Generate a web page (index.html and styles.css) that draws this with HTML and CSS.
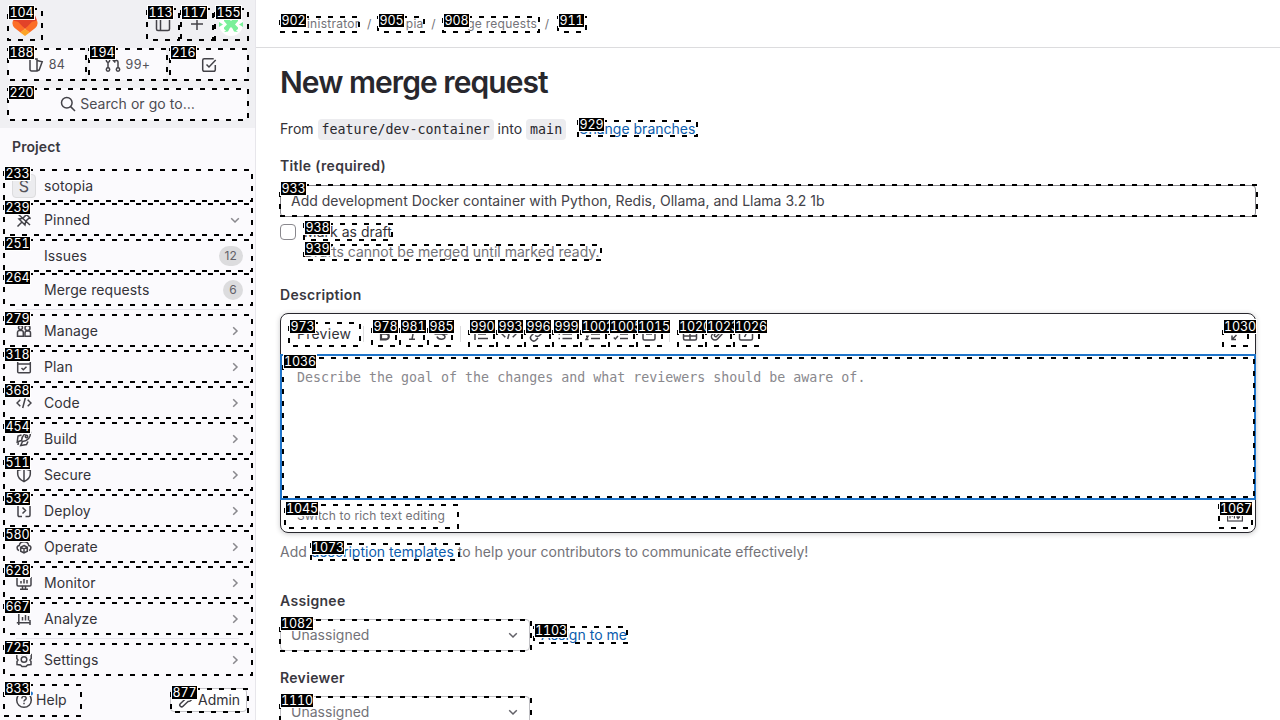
FILE: index.html
```html
<!DOCTYPE html>
<html lang="en">
<head>
<meta charset="utf-8">
<title>New merge request</title>
<link rel="stylesheet" href="styles.css">
</head>
<body>
<svg class="defs" width="0" height="0">
  <symbol id="right" viewBox="0 0 16 16"><path d="M6.2 4.2 10 8l-3.800 3.800"/></symbol>
  <symbol id="down" viewBox="0 0 16 16"><path d="M4.2 6.200 8 10l3.800-3.800"/></symbol>
  <symbol id="search" viewBox="0 0 16 16"><circle cx="6.8" cy="6.8" r="5.300"/><path d="m10.6 10.6 4.4 4.4"/></symbol>
  <symbol id="code" viewBox="0 0 16 16"><path d="M4.3 4.8 1 8l3.3 3.2M11.7 4.8 15 8l-3.3 3.2M9.3 3 6.7 13"/></symbol>
</svg>
<div class="app">
  <aside class="sidebar">
    <div class="super">
      <div class="brand-row">
        <svg class="logo" viewBox="0 0 26 25"><path fill="#e24329" d="M25 9.6 21.5.6 18.4 8H7.6L4.5.6 1 9.6 13 18z"/><path fill="#fc6d26" d="m25 9.6-5 1.2L13 18l4.500 3.500 5.800-4.600A6.500 6.500 0 0 0 25 9.600zM1 9.600l5 1.200L13 18l-4.500 3.500-5.800-4.600A6.500 6.500 0 0 1 1 9.600z"/><path fill="#fca326" d="M8.300 21.400 13 17.700l4.700 3.700L13 25z"/></svg>
        <div class="brand-actions">
          <svg class="icon" viewBox="0 0 16 16"><rect x="1.500" y="1.500" width="13" height="13" rx="1.500"/><path d="M5.500 2v12"/></svg>
          <svg class="icon" viewBox="0 0 16 16"><path d="M8 2v12M2 8h12"/></svg>
          <svg class="avatar" viewBox="0 0 24 24"><circle cx="12" cy="12" r="12" fill="#fff"/><path fill="#7af09a" d="M5 4l4 2 3 3 3-3 4-2v5l-3 3.500 3 3V20l-4-.5-1.500-3L12 15l-1.500 1.500-1.500 3L5 20v-4.500l3-3L5 9zM0 10l4 2.500L0 15zM24 10l-4 2.500 4 2.500z"/><path fill="#fff" d="M5 17l2 1.500L5 20zM19 17l-2 1.500 2 1.500z"/></svg>
        </div>
      </div>
      <div class="counters">
        <div class="counter"><svg class="icon" viewBox="0 0 16 16"><path d="M2 2h7v12H3.500A1.500 1.500 0 0 1 2 12.500zM9 3.500l5.200 1.200-3 8.300L9 14"/></svg>84</div>
        <div class="counter"><svg class="icon" viewBox="0 0 16 16"><circle cx="3" cy="12.500" r="1.700"/><circle cx="13" cy="12.500" r="1.700"/><circle cx="3" cy="3.500" r="1.700"/><path d="M3 5v6M13 11V5a1.500 1.500 0 0 0-1.500-1.500H8.500M10.300 1.500l-2 2 2 2"/></svg>99+</div>
        <div class="counter"><svg class="icon" viewBox="0 0 16 16"><path d="M14.300 8v4.800a1.500 1.500 0 0 1-1.500 1.500H3.200a1.500 1.500 0 0 1-1.500-1.500V3.200a1.500 1.500 0 0 1 1.500-1.500h9.500M5.500 7.500 8 10l6.700-7"/></svg></div>
      </div>
      <div class="search"><svg class="icon"><use href="#search"/></svg>Search or go to…</div>
    </div>
    <nav class="nav">
      <div class="nav-title">Project</div>
      <div class="item item-project"><span class="tile">S</span><span class="label">sotopia</span></div>
      <div class="item item-pinned"><svg class="icon" viewBox="0 0 16 16"><path d="m1.500 14.500 4-4M3 7l6 6 .8-3.800L13 6l1.500.500L9.500 1.500 10 3 6.800 6.200zM2 2l12 11"/></svg><span class="label">Pinned</span><svg class="icon chev"><use href="#down"/></svg></div>
      <div class="item"><span class="icon"></span><span class="label">Issues</span><span class="badge">12</span></div>
      <div class="item"><span class="icon"></span><span class="label">Merge requests</span><span class="badge">6</span></div>
      <hr class="rule">
      <div class="group">
        <div class="item"><svg class="icon" viewBox="0 0 16 16"><circle cx="4.500" cy="4.500" r="2"/><circle cx="11.500" cy="5" r="2.500"/><path d="M1.500 13.300V9.500a2 2 0 0 1 2-2h1.800a2 2 0 0 1 2 2v3.800zM9 13.300V10a2 2 0 0 1 2-2h1.500a2 2 0 0 1 2 2v3.300z"/></svg><span class="label">Manage</span><svg class="icon chev"><use href="#right"/></svg></div>
        <div class="item"><svg class="icon" viewBox="0 0 16 16"><rect x="1.700" y="1.700" width="12.600" height="12" rx="1"/><path d="M2 5h12M5.500 9l1.800 1.700 3.200-3"/></svg><span class="label">Plan</span><svg class="icon chev"><use href="#right"/></svg></div>
        <div class="item"><svg class="icon"><use href="#code"/></svg><span class="label">Code</span><svg class="icon chev"><use href="#right"/></svg></div>
        <div class="item"><svg class="icon" viewBox="0 0 16 16"><path d="M5.500 9.500C6 5 9 1.500 14.500 1.500 14.500 7 11 10 6.500 10.500zM5.500 4 2 5l-.800 6 4-1.500M12 10.500 10.500 13.500l-5.800 1 1.800-4M2.500 11.500c-.500 1-.500 1.500-.500 2.500"/><circle cx="10.500" cy="5.500" r="1.200"/></svg><span class="label">Build</span><svg class="icon chev"><use href="#right"/></svg></div>
        <div class="item"><svg class="icon" viewBox="0 0 16 16"><path d="M8 1.500 1.700 3.500V7c0 3.500 3 6 6.300 7.700 3.300-1.700 6.300-4.200 6.300-7.700V3.500zM8 2v12"/></svg><span class="label">Secure</span><svg class="icon chev"><use href="#right"/></svg></div>
        <div class="item"><svg class="icon" viewBox="0 0 16 16"><path d="M5 1.800H2v10.500a1.200 1.200 0 0 0 1.200 1.200H6M9.500 13.500h3.300a1.200 1.200 0 0 0 1.200-1.200V2M6.500 4.500 9.500 7.500l-3 3"/></svg><span class="label">Deploy</span><svg class="icon chev"><use href="#right"/></svg></div>
        <div class="item"><svg class="icon" viewBox="0 0 16 16"><path d="M3 11.500C.300 10.500.500 6.800 3.300 6.500 4 1.500 12 1.500 12.700 6.500c2.800.3 3 4 .300 5M8 6.500l3.300 1.800v3.900L8 14l-3.300-1.800V8.300zM4.700 8.300 8 10l3.300-1.700M8 10v4"/></svg><span class="label">Operate</span><svg class="icon chev"><use href="#right"/></svg></div>
        <div class="item"><svg class="icon" viewBox="0 0 16 16"><path d="M1 2v7.800a1.200 1.200 0 0 0 1.200 1.200h11.600a1.200 1.200 0 0 0 1.200-1.200V2M5 6v2.500M8 4v4.500M11 5v3.500M6.500 11v3M9.500 11v3M4 14.200h8"/></svg><span class="label">Monitor</span><svg class="icon chev"><use href="#right"/></svg></div>
        <div class="item"><svg class="icon" viewBox="0 0 16 16"><path d="M2.800 1v13M.800 11.800h14M6.500 6v3.500M9.500 4v5.500M12.500 5v4.500M14 9v5"/></svg><span class="label">Analyze</span><svg class="icon chev"><use href="#right"/></svg></div>
      </div>
      <hr class="rule">
      <div class="item item-settings"><svg class="icon" viewBox="0 0 16 16"><path d="M5.500 2.500V1.500h5v1l3.500-.500 1.200.500v4L14 8l1 1.500v3l-3.500.500L10 14.500H6L4.500 13 1 12.500v-3L2 8 .800 6.500v-4L2 2z"/><circle cx="8" cy="7.500" r="2.800"/></svg><span class="label">Settings</span><svg class="icon chev"><use href="#right"/></svg></div>
    </nav>
    <div class="foot">
      <div class="help"><svg class="icon" viewBox="0 0 16 16"><circle cx="8" cy="8" r="7.300"/><path d="M5.800 6.500C5.800 3.700 10.200 3.700 10.200 6.300 10.200 8 8 7.800 8 9.500M8 10.700v1.600"/><circle class="dot" cx="15" cy="1.500" r="2"/></svg>Help</div>
      <div class="admin"><svg class="icon" viewBox="0 0 16 16"><path d="M10 9.500 5 14.200a1.600 1.600 0 0 1-2.700-2.500L7 7.200A4 4 0 0 1 12 2L9.700 4.500l2 2L14 4.200a4 4 0 0 1-4 5.300z"/></svg>Admin</div>
    </div>
  </aside>
  <main class="main">
    <div class="crumbs"><span>Administrator</span><i>/</i><span>sotopia</span><i>/</i><span>Merge requests</span><i>/</i><span>New</span></div>
    <div class="content">
      <h1>New merge request</h1>
      <div class="branches">From <code>feature/dev-container</code> into <code>main</code><a>Change branches</a></div>
      <div class="field-label">Title (required)</div>
      <div class="input">Add development Docker container with Python, Redis, Ollama, and Llama 3.2 1b</div>
      <div class="draft"><span class="check"></span><div><div class="draft-name">Mark as draft</div><div class="draft-help">Drafts cannot be merged until marked ready.</div></div></div>
      <div class="field-label desc-label">Description</div>
      <div class="editor">
        <div class="toolbar">
          <span class="preview">Preview</span><span class="sep"></span>
          <div class="tools">
            <svg class="icon heavy" viewBox="0 0 16 16"><path d="M4 2.500h4.500a2.600 2.600 0 0 1 0 5.200H4zM4 7.700h5a2.800 2.800 0 0 1 0 5.600H4z"/></svg>
            <svg class="icon" viewBox="0 0 16 16"><path d="M6 2.500h6M4 13.300h6M9 2.500l-2 10.800"/></svg>
            <svg class="icon" viewBox="0 0 16 16"><path d="M12 4.500C11 1.500 4.500 1.500 4.500 4.800 4.500 8 12 7.500 12 10.800c0 3.500-7 3.200-8-.300M1.500 8h13"/></svg>
          </div><span class="sep"></span>
          <div class="tools">
            <svg class="icon" viewBox="0 0 16 16"><path d="M2 2v12M5 4h10M5 8h8M5 12.500h10"/></svg>
            <svg class="icon"><use href="#code"/></svg>
            <svg class="icon" viewBox="0 0 16 16"><path d="m7 4 2-2a3 3 0 0 1 4.500 4.500l-3 3a3 3 0 0 1-4.300 0M9 12l-2 2a3 3 0 0 1-4.500-4.500l3-3a3 3 0 0 1 4.300 0"/></svg>
            <svg class="icon" viewBox="0 0 16 16"><path d="M1.500 3.500H3M1.500 8H3M1.500 12.500H3M5.500 3.500H15M5.500 8H15M5.500 12.500H15"/></svg>
            <svg class="icon" viewBox="0 0 16 16"><path d="M2 2v4M1 10.300h2L1 13.500h2.500M6 3.500h9M6 8h9M6 12.500h9"/></svg>
            <svg class="icon" viewBox="0 0 16 16"><path d="m.800 3.500 1.500 1.500L5 2M.800 11.500 2.300 13 5 10M7 3.500h8M7 8h8M7 12.500h8"/></svg>
            <svg class="icon" viewBox="0 0 16 16"><rect x="2" y="2" width="12" height="12" rx="1.500"/><path d="M5 8h6"/></svg>
          </div><span class="sep"></span>
          <div class="tools">
            <svg class="icon" viewBox="0 0 16 16"><rect x="1.500" y="2" width="13" height="12" rx="1.500"/><path d="M8 2v12M2 6h12M2 10h12"/></svg>
            <svg class="icon" viewBox="0 0 16 16"><path d="m11.500 5.500-5 5a1.500 1.500 0 0 1-2-2L10 3a2.500 2.500 0 0 1 3.500 3.500l-6 6.500a3.500 3.500 0 0 1-5-5L8 2"/></svg>
            <svg class="icon" viewBox="0 0 16 16"><rect x="1.500" y="2" width="13" height="12" rx="1.500"/><path d="M9.500 5 6.500 11"/></svg>
          </div>
          <svg class="icon expand" viewBox="0 0 16 16"><path d="M10 2h4v4M14 2 9.500 6.500M6 13.500H2v-4M2 13.500l4.500-4.500"/></svg>
        </div>
        <div class="textarea">Describe the goal of the changes and what reviewers should be aware of.</div>
        <div class="editor-foot"><span>Switch to rich text editing</span><svg class="icon md" viewBox="0 0 16 16"><rect x=".600" y="3" width="14.800" height="10"/><path d="M3 10.500v-5l2.200 2.500 2.200-2.500v5M11 5.500v5M9.500 8.500 11 10.500l2-2"/></svg></div>
      </div>
      <div class="hint">Add <a>description templates</a> to help your contributors to communicate effectively!</div>
      <div class="field-label assignee-label">Assignee</div>
      <div class="pick-row"><div class="select">Unassigned<svg class="icon"><use href="#down"/></svg></div><a>Assign to me</a></div>
      <div class="field-label reviewer-label">Reviewer</div>
      <div class="pick-row"><div class="select">Unassigned<svg class="icon"><use href="#down"/></svg></div></div>
    </div>
  </main>
</div>
<div class="marks" id="marks"></div>
<script src="marks.js"></script>
</body>
</html>
```

FILE: styles.css
```css
* { box-sizing: border-box; }
html, body { margin: 0; height: 720px; overflow: hidden; }
body { font-family: Inter, "Noto Sans", sans-serif; font-size: 14px; line-height: 20px; letter-spacing: .01px; color: #333238; background: #fff; }
a { color: #0b5cad; }
.defs { position: absolute; }
.app { display: flex; height: 720px; }
.icon { width: 16px; height: 16px; flex: none; fill: none; stroke: #434248; stroke-width: 1.5; }
.heavy { stroke-width: 2.2; }

.sidebar { width: 256px; flex: none; display: flex; flex-direction: column; background: #fbfafd; border-right: 1px solid #e7e6eb; }
.super { height: 128px; padding: 8px; background: #f0f0f3; display: flex; flex-direction: column; gap: 8px; }
.brand-row { height: 32px; display: flex; justify-content: space-between; align-items: center; padding: 0 4px; }
.logo { width: 26px; height: 25px; margin-top: -2px; }
.brand-actions { display: flex; align-items: center; gap: 18px; margin-right: 0; }
.brand-actions .avatar { width: 24px; height: 24px; margin-left: -4px; }
.counters { display: flex; gap: 4px; }
.counter { flex: 1; height: 32px; padding-top: 1px; display: flex; align-items: center; justify-content: center; gap: 5px; background: #fbfafd; border-radius: 4px; font-size: 12.5px; letter-spacing: .4px; color: #535158; }
.search { height: 32px; display: flex; align-items: center; justify-content: center; gap: 4px; background: #fbfafd; border-radius: 4px; letter-spacing: .05px; color: #4c4b51; }

.nav { flex: 1; padding: 0 4px; letter-spacing: .1px; }
.nav-title { height: 42px; padding: 9px 8px 0; font-weight: 600; color: #3a383f; }
.item { height: 32px; margin-bottom: 2px; padding: 0 8px 0 12px; display: flex; align-items: center; gap: 12px; }
.item .label { flex: 1; }
.item-project { padding-left: 8px; gap: 8px; }
.item-pinned { margin-bottom: 4px; }
.tile { width: 24px; height: 24px; border: 1px solid #dcdcde; border-radius: 4px; background: #ececef; text-align: center; line-height: 22px; font-size: 16px; color: #535158; }
.item .chev { stroke: #89888d; }
.badge { height: 20px; min-width: 20px; padding: 0 6px; border-radius: 10px; background: #dcdcde; font-size: 12px; text-align: center; color: #626168; }
.rule { height: 1px; border: 0; margin: 3px 12px 5px; background: #e7e6ee; }
.group .item { margin-bottom: 4px; }
.group .item:last-child { margin-bottom: 3px; }
.foot { height: 40px; padding: 0 8px 0 16px; display: flex; align-items: center; justify-content: space-between; letter-spacing: .05px; }
.help { display: flex; align-items: center; gap: 4px; }
.help .icon { overflow: visible; }
.dot { fill: #1f75cb; stroke: none; }
.admin { height: 24px; width: 77px; padding-left: 1px; display: flex; align-items: center; justify-content: center; gap: 4px; background: #fff; border: 1px solid #c5c4c9; border-radius: 4px; letter-spacing: -.05px; }

.main { flex: 1; }
.crumbs { height: 48px; padding-left: 24px; display: flex; align-items: center; border-bottom: 1px solid #dcdcde; font-size: 12px; letter-spacing: .27px; color: #737278; }
.crumbs i { font-style: normal; padding: 0 8.5px 0 7.5px; }
.content { padding: 14px 24px 0; }
h1 { margin: 0; height: 40px; line-height: 40px; font-size: 30px; font-weight: 600; letter-spacing: -.95px; color: #28272d; }
.branches { height: 22px; margin-top: 16px; display: flex; align-items: center; white-space: pre; }
code { height: 21px; padding: 0 4px; border-radius: 4px; background: #ececef; font: 13.3px/21px "DejaVu Sans Mono", monospace; letter-spacing: 0; color: #28272d; }
.branches a { margin-left: 12px; }
.field-label { height: 20px; margin-top: 16px; font-weight: 600; color: #3a383f; letter-spacing: .32px; }
.input { height: 32px; margin-top: 9px; padding: 5px 10px; border: 1px solid #89888d; border-radius: 4px; color: #434248; }
.draft { margin-top: 5px; display: flex; gap: 8px; }
.check { width: 16px; height: 16px; margin-top: 2px; border: 1px solid #89888d; border-radius: 4px; }
.draft-name { height: 20px; }
.draft-help { color: #737278; }
.desc-label { margin-top: 23px; }
.editor { height: 220px; margin-top: 8px; border: 1px solid #28272d; border-radius: 8px; box-shadow: 0 1px 5px rgba(40, 39, 45, .25); }
.toolbar { height: 40px; padding: 0 9px 0 16px; display: flex; align-items: center; }
.sep { width: 1px; height: 16px; background: #dcdcde; }
.preview { width: 66px; letter-spacing: .25px; }
.tools { display: flex; gap: 12px; padding: 0 12px; }
.preview + .sep + .tools { padding: 0 11px 0 13px; }
.expand { margin-left: auto; }
.textarea { height: 146px; margin: 0 -1px; padding: 12px 15px; border: 2px solid #1f75cb; font: 13.3px/20px "DejaVu Sans Mono", monospace; letter-spacing: 0; color: #89888d; }
.editor-foot { height: 32px; padding: 0 12px 0 16px; display: flex; justify-content: space-between; align-items: center; font-size: 12px; letter-spacing: .15px; color: #737278; }
.md { stroke-width: 1.2; }
.hint { margin-top: 9px; color: #737278; }
.assignee-label { margin-top: 29px; }
.pick-row { display: flex; align-items: center; gap: 11px; margin-top: 8px; }
.select { width: 250px; height: 32px; padding: 0 8px 0 10px; border: 1px solid #bfbfc3; border-radius: 4px; display: flex; align-items: center; justify-content: space-between; color: #737278; }
.select .icon { stroke: #626168; }
.reviewer-label { margin-top: 17px; }

.marks { position: absolute; inset: 0; overflow: hidden; pointer-events: none; }
.marks svg { position: absolute; left: 0; top: 0; }
.marks rect { fill: none; stroke: #000; stroke-width: 2; stroke-dasharray: 5 7; }
.tag { position: absolute; width: 27px; height: 15px; border: 1px solid #fff; background: #000; color: #fff; font: 12.5px/13px Inter, sans-serif; font-variant-numeric: tabular-nums; letter-spacing: -.1px; text-align: center; white-space: nowrap; }
.tag-wide { width: 34px; }
```

FILE: marks.js
```js
// Each entry: id, left, top, width, height of the outlined element.
const marks = [
  [104,7,8,36,33],[113,146,8,34,33],[117,180,8,34,33],[155,214,8,35,33],
  [188,7,48,80,33],[194,88,48,80,33],[216,169,48,80,33],[220,7,88,242,33],
  [233,3,169,250,33],[239,3,203,250,33],[251,3,239,250,33],[264,3,273,250,33],
  [279,3,314,250,33],[318,3,350,250,33],[368,3,386,250,33],[454,3,422,250,33],
  [511,3,458,250,33],[532,3,494,250,33],[580,3,530,250,33],[628,3,566,250,33],
  [667,3,602,250,33],[725,3,643,250,33],[833,3,684,79,33],[877,170,688,79,25],
  [902,279,16,81,17],[905,377,16,48,17],[908,442,16,98,17],[911,557,16,30,17],
  [929,577,120,121,17],[933,279,184,979,33],[938,303,223,90,18],[939,303,244,299,17],
  [973,288,322,73,25],[978,371,322,26,25],[981,399,322,26,25],[985,427,322,26,25],
  [990,468,322,27,25],[993,496,322,27,25],[996,524,322,27,25],[999,552,322,27,25],
  [1002,580,322,27,25],[1005,608,322,27,25],[1015,636,322,27,25],
  [1020,677,322,27,25],[1023,705,322,27,25],[1026,733,322,27,25],[1030,1222,322,27,25],
  [1036,282,357,973,141],[1045,284,504,175,25],[1067,1218,504,35,25],
  [1073,310,543,150,18],[1082,279,619,253,33],[1103,533,626,95,18],[1110,279,696,253,33]
];
const host = document.getElementById("marks");
host.innerHTML = '<svg width="1280" height="720">' + marks.map(([, x, y, w, h]) =>
  `<rect x="${x + 1}" y="${y + 1}" width="${w - 2}" height="${h - 2}"/>`).join("") + "</svg>" +
  marks.map(([id, x, y]) => `<span class="tag${id > 999 ? " tag-wide" : ""}" style="left:${x + 1}px;top:${y - 3}px">${id}</span>`).join("");
```
